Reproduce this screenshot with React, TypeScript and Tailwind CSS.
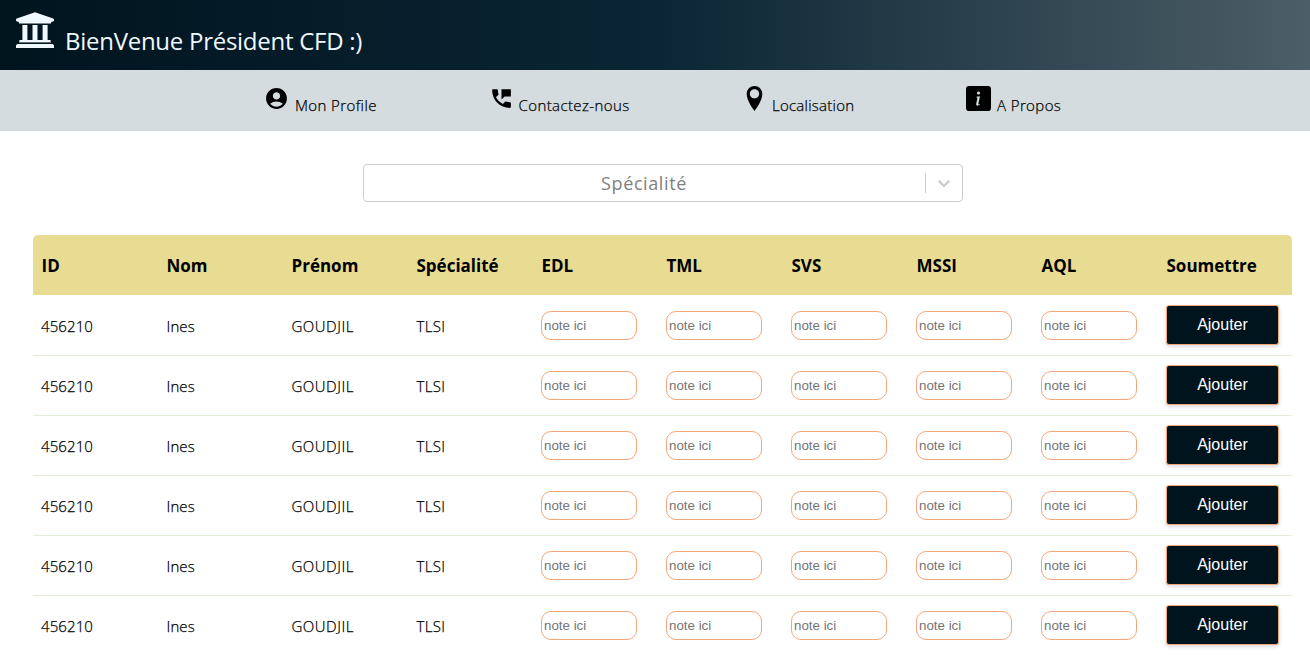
import { ImLocation } from "react-icons/im";
import { MdAccountCircle, MdPermPhoneMsg } from "react-icons/md";
import { BsInfoSquareFill } from "react-icons/bs";

const grades = ["EDL", "TML", "SVS", "MSSI", "AQL"];
const columns = ["ID", "Nom", "Prénom", "Spécialité", ...grades, "Soumettre"];
const students = Array.from({ length: 6 }, () => ({
  id: "456210",
  nom: "Ines",
  prenom: "GOUDJIL",
  specialite: "TLSI",
}));

const rowGrid = "grid grid-cols-[repeat(9,125px)_1fr] items-center pl-2";
const bodyText = "font-light [-webkit-text-stroke:0.25px_black]";

function BankIcon() {
  return (
    <svg className="mt-3 h-9 w-[38px] shrink-0" viewBox="0 0 38 36" fill="currentColor">
      <path d="M19 .3 L37.2 6.6 Q38 7 38 7.8 V9 L35 10.2 V11.5 H3 V10.2 L0 9 V7.8 Q0 7 .8 6.6Z" />
      <path d="M6.4 13H11.4V28H6.4ZM16.5 13H21.5V28H16.5ZM26.6 13H31.6V28H26.6Z" />
      <path d="M3.4 28H34.6V30H3.4ZM1.4 32H36.6L38 33.2V36H0V33.2Z" />
      <path opacity=".4" d="M3 30H35v1H3Z" />
    </svg>
  );
}

export default function App() {
  return (
    <div className="h-[655px] overflow-hidden bg-white font-['Open_Sans','Noto_Sans',sans-serif] text-black">
      <header className="flex h-[70px] items-start bg-[linear-gradient(to_right,#00141e,#0b2534_50%,#4c5e67)] pl-4 text-[#f0f8ff]">
        <BankIcon />
        <h1 className="ml-[11px] mt-[24px] whitespace-nowrap text-[24px] leading-[34px] tracking-[-0.27px]">
          BienVenue Président CFD :)
        </h1>
      </header>

      <nav className={`${bodyText} flex h-[61px] items-start bg-[#d4dcdf] pt-4 text-[15px] leading-[38px]`}>
        <a className="ml-[264px] flex w-[225px] items-start">
          <MdAccountCircle className="size-[25px]" />
          <span className="ml-[6px] whitespace-nowrap tracking-[0.4px]">Mon Profile</span>
        </a>
        <a className="flex w-[253px] items-start">
          <MdPermPhoneMsg className="size-[25px]" />
          <span className="ml-[4.5px] whitespace-nowrap tracking-[0.4px]">Contactez-nous</span>
        </a>
        <a className="flex w-[224px] items-start">
          <ImLocation className="size-[25px]" />
          <span className="ml-[5px] whitespace-nowrap tracking-[0.25px]">Localisation</span>
        </a>
        <a className="flex items-start">
          <BsInfoSquareFill className="size-[25px]" />
          <span className="ml-[6px] whitespace-nowrap tracking-[0.4px]">A Propos</span>
        </a>
      </nav>

      <main className="pl-[33px] pr-[18px] pt-[33px]">
        <div className="ml-[330px] flex h-[38px] w-[600px] items-center rounded-[4px] border border-[#cccccc]">
          <div className="flex-1 pr-px pt-px text-center text-[18px] tracking-[0.6px] text-[#808080]">Spécialité</div>
          <span className="h-5 w-px bg-[#cccccc]" />
          <svg className="mx-2 size-5 fill-[#cccccc]" viewBox="0 0 20 20">
            <path d="M4.516 7.548c0.436-0.446 1.043-0.481 1.576 0l3.908 3.747 3.908-3.747c0.533-0.481 1.141-0.446 1.574 0 0.436 0.445 0.408 1.197 0 1.615-0.406 0.418-4.695 4.502-4.695 4.502-0.217 0.223-0.502 0.335-0.787 0.335s-0.57-0.112-0.789-0.335c0 0-4.287-4.084-4.695-4.502s-0.436-1.17 0-1.615z" />
          </svg>
        </div>

        <div className="mt-[33px]">
          <div className={`${rowGrid} h-[60px] rounded-t-[5px] bg-[#e8dc93] pt-0.5 text-[17px] font-bold`}>
            {columns.map((label) => (
              <span key={label} className="pl-[0.5px]">
                {label}
              </span>
            ))}
          </div>
          {students.map((s, i) => (
            <div
              key={i}
              className={`${rowGrid} h-[60px] text-[15px] ${i > 0 ? "shadow-[inset_0_1px_0_#e2eed5]" : ""}`}
            >
              <span className={`${bodyText} pt-0.5 tracking-[0.1px]`}>{s.id}</span>
              <span className={`${bodyText} pl-[0.5px] pt-0.5 tracking-[0.1px]`}>{s.nom}</span>
              <span className={`${bodyText} pl-[0.5px] pt-0.5 tracking-[0.5px]`}>{s.prenom}</span>
              <span className={`${bodyText} pl-[0.5px] pt-0.5 tracking-[0.3px]`}>{s.specialite}</span>
              {grades.map((g) => (
                <input
                  key={g}
                  placeholder="note ici"
                  className="h-[29px] w-24 rounded-[10px] border border-[#f4a77a] px-[2px] font-['Liberation_Sans',Arial,sans-serif] text-[13.333px] placeholder:text-[#757575]"
                />
              ))}
              <button className="h-10 w-[113px] rounded-[3px] border border-[#f4a77a] bg-[#00141e] font-['Liberation_Sans',Arial,sans-serif] text-[16px] text-white shadow-[0_2px_4px_rgba(0,0,0,0.15)]">
                Ajouter
              </button>
            </div>
          ))}
        </div>
      </main>
    </div>
  );
}
